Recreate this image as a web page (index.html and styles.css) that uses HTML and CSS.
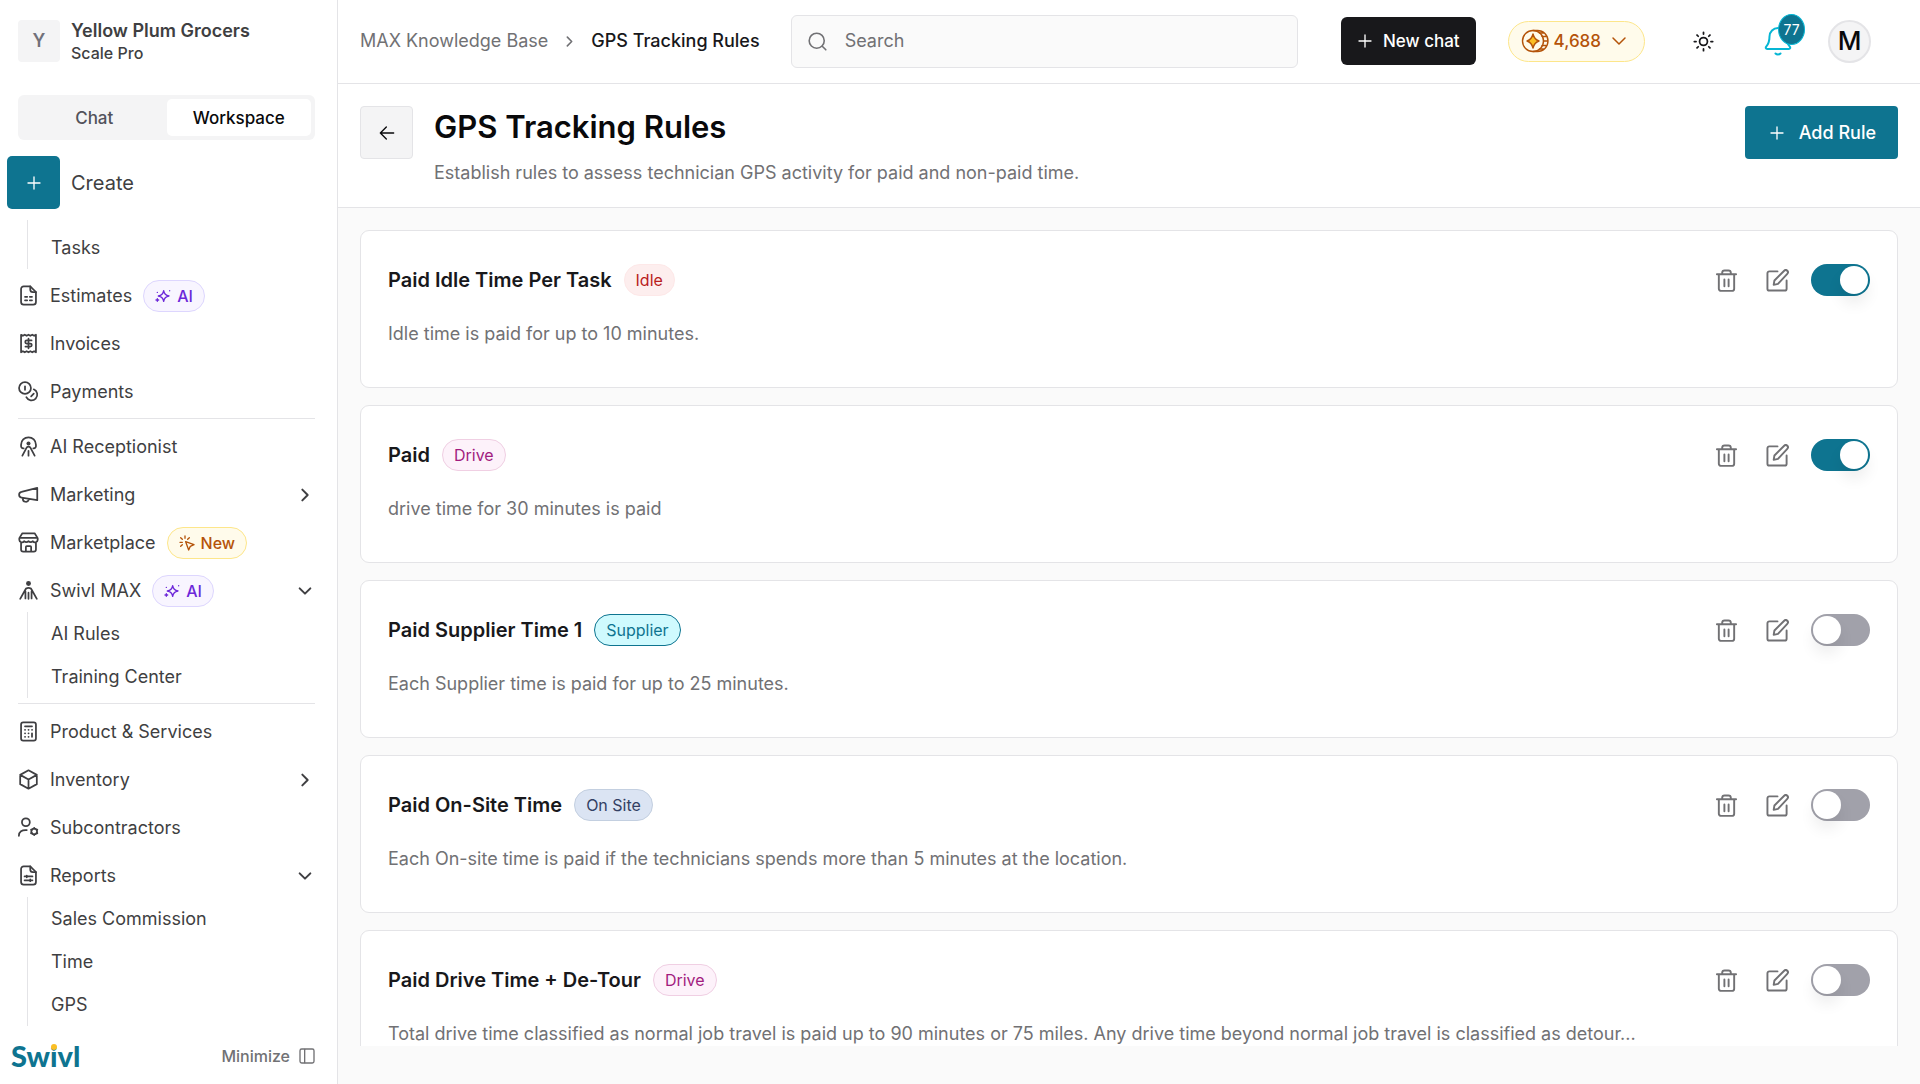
FILE: index.html
```
<!DOCTYPE html>
<html lang="en">
<head>
    <meta charset="UTF-8">
    <meta name="viewport" content="width=device-width, initial-scale=1.0">
    <title>GPS Tracking Rules</title>
    <link rel="stylesheet" href="styles.css">
</head>
<body>
    <!-- Icon set -->
    <svg class="sprite" aria-hidden="true">
        <symbol id="i-plus" viewBox="0 0 24 24"><path d="M12 3v18M3 12h18"/></symbol>
        <symbol id="i-right" viewBox="0 0 24 24"><path d="M8 4l8 8-8 8"/></symbol>
        <symbol id="i-down" viewBox="0 0 24 24"><path d="M4 8l8 8 8-8"/></symbol>
        <symbol id="i-back" viewBox="0 0 24 24"><path d="M22 12H2M11 3l-9 9 9 9"/></symbol>
        <symbol id="i-search" viewBox="0 0 24 24"><circle cx="11" cy="11" r="9.500"/><path d="M18 18l4.500 4.500"/></symbol>
        <symbol id="i-estimate" viewBox="0 0 24 24">
            <path d="M14 1.500H6.500A3 3 0 0 0 3.500 4.500v15a3 3 0 0 0 3 3h11a3 3 0 0 0 3-3V8z"/>
            <path d="M14 1.500V5a3 3 0 0 0 3 3h3.500M8 13.500h2.500M13.500 13.500H16M8 17.500h2.500M13.500 17.500H16"/>
        </symbol>
        <symbol id="i-invoice" viewBox="0 0 24 24">
            <path d="M3.500 2l2.100 1.200 2.100-1.200 2.200 1.200L12 2l2.100 1.200 2.200-1.200 2.100 1.200 2.100-1.200v20l-2.100-1.200-2.100 1.200-2.200-1.200-2.100 1.200-2.100-1.200-2.200 1.200-2.100-1.200-2.100 1.200z"/>
            <path d="M15.500 8.500H10a1.700 1.700 0 0 0 0 3.500h4a1.700 1.700 0 0 1 0 3.500H8.500M12 6.500v11"/>
        </symbol>
        <symbol id="i-payments" viewBox="0 0 24 24">
            <circle cx="8" cy="8" r="6.800"/>
            <path d="M8 6v4M18 9.500a6.600 6.600 0 1 1-8.500 9M18 14.500l-3 3"/>
        </symbol>
        <symbol id="i-reception" viewBox="0 0 24 24">
            <path d="M6.500 14H5.800A2.300 2.300 0 0 1 3.500 11.700V10a8.500 8.500 0 0 1 17 0v1.700a2.300 2.300 0 0 1-2.300 2.300h-.7"/>
            <path d="M10 13L5 22.500M14 13l5 9.500M10 13q2-1.800 4 0M12 17v5.500"/>
            <circle class="solid" cx="12" cy="8.500" r="2.300"/>
        </symbol>
        <symbol id="i-megaphone" viewBox="0 0 24 24">
            <path d="M22 4.500v14L4 15.500a3.300 3.300 0 0 1 0-6.500zM5.500 16v.8a3.500 3.500 0 0 0 6.800 1.200v-1"/>
        </symbol>
        <symbol id="i-store" viewBox="0 0 24 24">
            <path d="M5 1.500h14l3.500 5.500v2a3 3 0 0 1-5.500 1.500 3.500 3.500 0 0 1-5 0 3.500 3.500 0 0 1-5 0A3 3 0 0 1 1.500 9V7zM2 6.800h20M3.500 12v8a2.500 2.500 0 0 0 2.500 2.500h12a2.500 2.500 0 0 0 2.500-2.500v-8M9 22v-5a1 1 0 0 1 1-1h4a1 1 0 0 1 1 1v5"/>
        </symbol>
        <symbol id="i-swivl" viewBox="0 0 24 24">
            <circle class="solid" cx="12" cy="4" r="2.800"/>
            <path d="M9 10L2.500 21.500M15 10l6.500 11.500M9 10q3-2 6 0M8.500 13v8M15.500 13v8M12 14.500v7"/>
        </symbol>
        <symbol id="i-calc" viewBox="0 0 24 24">
            <rect x="3.500" y="1.500" width="17" height="21" rx="2.500"/>
            <path d="M8 6h8M8 10h.1M12 10h.1M16 10h.1M8 14h.1M12 14h.1M8 18h.1M12 18h.1M16 14v4"/>
        </symbol>
        <symbol id="i-box" viewBox="0 0 24 24">
            <path d="M12 1.500l9.500 5.200v10.600L12 22.500l-9.500-5.200V6.700zM2.500 6.700L12 12l9.500-5.300M12 12v10.500"/>
        </symbol>
        <symbol id="i-subs" viewBox="0 0 24 24">
            <circle cx="9" cy="6" r="4.500"/>
            <path d="M1 21.500c0-4.500 3.500-7 9-6.500"/>
            <circle cx="18.500" cy="16.500" r="3.300"/>
            <path d="M18.500 12.300v.9M18.500 19.800v.9M14.900 14.400l.8.500M21.300 18.100l.8.500M22.100 14.400l-.8.500M15.700 18.100l-.8.500"/>
        </symbol>
        <symbol id="i-report" viewBox="0 0 24 24">
            <path d="M14 1.500H6.500A3 3 0 0 0 3.500 4.500v15a3 3 0 0 0 3 3h11a3 3 0 0 0 3-3V8z"/>
            <path d="M14 1.500V5a3 3 0 0 0 3 3h3.500M7.500 13h9M7.500 17.500h9M10 12v2M14 16.500v2"/>
        </symbol>
        <symbol id="i-sparkle" viewBox="0 0 24 24">
            <path d="M13 4c.7 5 2.500 7 8 8-5.500 1-7.300 3-8 8-.7-5-2.500-7-8-8 5.500-1 7.300-3 8-8zM3.500 16v4M1.500 18h4M3.500 6.500v.1M22 4v.1"/>
        </symbol>
        <symbol id="i-click" viewBox="0 0 24 24">
            <path d="M10 10l12.500 4.500-5.500 2.500-2.500 5.500zM9 1.500v3.500M2.500 4L5 6.500M1.500 11H5M15.500 4L13 6.500M5 14.500l-2.500 2.500"/>
        </symbol>
        <symbol id="i-coin" viewBox="0 0 28 24">
            <circle cx="12" cy="12" r="10.500"/>
            <path d="M12 1.500h4.500a10.500 10.500 0 0 1 0 21H12M18.500 4h4M21 7.500h4.200M22.500 12H27M21 16.500h4.200M18.500 20h4"/>
            <path class="star" d="M12 5c1 4 3 6 6 7-3 1-5 3-6 7-1-4-3-6-6-7 3-1 5-3 6-7z"/>
        </symbol>
        <symbol id="i-sun" viewBox="0 0 24 24">
            <circle cx="12" cy="12" r="4.500"/>
            <path d="M12 1.500v2M12 20.500v2M1.500 12h2M20.500 12h2M4.600 4.600L6 6M18 18l1.400 1.400M4.600 19.400L6 18M18 6l1.400-1.400"/>
        </symbol>
        <symbol id="i-bell" viewBox="0 0 28 30">
            <path d="M14 2a8.500 8.500 0 0 0-8.500 8.500c0 5-1 7.500-3.300 10.200-.8 1-.4 2.300 1 2.300h21.600c1.400 0 1.800-1.300 1-2.300-2.300-2.700-3.300-5.200-3.300-10.200A8.500 8.500 0 0 0 14 2zM11.500 27.500a3.500 3.500 0 0 0 5 0"/>
        </symbol>
        <symbol id="i-trash" viewBox="0 0 24 24">
            <path d="M2 5.500h20M4 5.500v15a2.300 2.300 0 0 0 2.300 2.300h11.400a2.300 2.300 0 0 0 2.300-2.300v-15M7.500 5.500V4A2.500 2.500 0 0 1 10 1.500h4A2.500 2.500 0 0 1 16.500 4v1.500M9.800 11v7M14.200 11v7"/>
        </symbol>
        <symbol id="i-edit" viewBox="0 0 24 24">
            <path d="M12 2.500H3.500a2 2 0 0 0-2 2v16a2 2 0 0 0 2 2h16a2 2 0 0 0 2-2V12"/>
            <path d="M8 16.500l.8-4.500L19 1.800a2.200 2.200 0 0 1 3.200 3.200L12.500 15.500z"/>
        </symbol>
        <symbol id="i-panel" viewBox="0 0 24 24"><rect x="1.500" y="1.500" width="21" height="21" rx="2.500"/><path d="M8.500 2v20"/></symbol>
    </svg>

    <div class="app">
        <aside class="sidebar">
            <div class="company">
                <span class="company-logo">Y</span>
                <div class="company-info">
                    <div class="company-name">Yellow Plum Grocers</div>
                    <div class="company-plan">Scale Pro</div>
                </div>
            </div>

            <div class="tabs">
                <button type="button" class="tab">Chat</button>
                <button type="button" class="tab active">Workspace</button>
            </div>

            <button type="button" class="create">
                <span class="create-icon"><svg class="icon icon-sm"><use href="#i-plus"/></svg></span>
                Create
            </button>

            <nav class="nav">
                <div class="nav-sub nav-sub-first">
                    <a href="#">Tasks</a>
                </div>
                <a class="nav-item" href="#"><svg class="icon"><use href="#i-estimate"/></svg>Estimates
                    <span class="tag tag-ai"><svg class="icon icon-sm"><use href="#i-sparkle"/></svg>AI</span></a>
                <a class="nav-item" href="#"><svg class="icon"><use href="#i-invoice"/></svg>Invoices</a>
                <a class="nav-item" href="#"><svg class="icon"><use href="#i-payments"/></svg>Payments</a>
                <hr>
                <a class="nav-item" href="#"><svg class="icon"><use href="#i-reception"/></svg>AI Receptionist</a>
                <a class="nav-item" href="#"><svg class="icon"><use href="#i-megaphone"/></svg>Marketing
                    <svg class="icon icon-sm chevron"><use href="#i-right"/></svg></a>
                <a class="nav-item" href="#"><svg class="icon"><use href="#i-store"/></svg>Marketplace
                    <span class="tag tag-new"><svg class="icon icon-sm"><use href="#i-click"/></svg>New</span></a>
                <a class="nav-item" href="#"><svg class="icon"><use href="#i-swivl"/></svg>Swivl MAX
                    <span class="tag tag-ai"><svg class="icon icon-sm"><use href="#i-sparkle"/></svg>AI</span>
                    <svg class="icon icon-sm chevron"><use href="#i-down"/></svg></a>
                <div class="nav-sub">
                    <a href="#">AI Rules</a>
                    <a href="#">Training Center</a>
                </div>
                <hr>
                <a class="nav-item" href="#"><svg class="icon"><use href="#i-calc"/></svg>Product &amp; Services</a>
                <a class="nav-item" href="#"><svg class="icon"><use href="#i-box"/></svg>Inventory
                    <svg class="icon icon-sm chevron"><use href="#i-right"/></svg></a>
                <a class="nav-item" href="#"><svg class="icon"><use href="#i-subs"/></svg>Subcontractors</a>
                <a class="nav-item" href="#"><svg class="icon"><use href="#i-report"/></svg>Reports
                    <svg class="icon icon-sm chevron"><use href="#i-down"/></svg></a>
                <div class="nav-sub">
                    <a href="#">Sales Commission</a>
                    <a href="#">Time</a>
                    <a href="#">GPS</a>
                </div>
            </nav>

            <div class="sidebar-footer">
                <a class="brand" href="#">Sw<span class="brand-i">i</span>vl</a>
                <button type="button" class="minimize">Minimize <svg class="icon icon-sm"><use href="#i-panel"/></svg></button>
            </div>
        </aside>

        <main class="main">
            <header class="topbar">
                <div class="breadcrumb">
                    <a href="#">MAX Knowledge Base</a>
                    <svg class="icon"><use href="#i-right"/></svg>
                    <span class="current">GPS Tracking Rules</span>
                </div>
                <label class="search">
                    <svg class="icon"><use href="#i-search"/></svg>
                    <input type="search" placeholder="Search" aria-label="Search">
                </label>
                <button type="button" class="new-chat"><svg class="icon"><use href="#i-plus"/></svg>New chat</button>
                <button type="button" class="credits">
                    <svg class="icon coin"><use href="#i-coin"/></svg>4,688
                    <svg class="icon credits-arrow"><use href="#i-down"/></svg>
                </button>
                <button type="button" class="theme" aria-label="Theme"><svg class="icon"><use href="#i-sun"/></svg></button>
                <button type="button" class="bell" aria-label="Notifications">
                    <svg class="icon"><use href="#i-bell"/></svg>
                    <span class="bell-count">77</span>
                </button>
                <button type="button" class="avatar">M</button>
            </header>

            <section class="page-head">
                <button type="button" class="back" aria-label="Back"><svg class="icon icon-sm"><use href="#i-back"/></svg></button>
                <div class="page-title">
                    <h1>GPS Tracking Rules</h1>
                    <p>Establish rules to assess technician GPS activity for paid and non-paid time.</p>
                </div>
                <button type="button" class="add-rule"><svg class="icon icon-sm"><use href="#i-plus"/></svg>Add Rule</button>
            </section>

            <section class="rules">
                <article class="rule">
                    <div class="rule-head">
                        <h2>Paid Idle Time Per Task</h2>
                        <span class="badge badge-idle">Idle</span>
                        <div class="rule-actions">
                            <button type="button" aria-label="Delete"><svg class="icon"><use href="#i-trash"/></svg></button>
                            <button type="button" aria-label="Edit"><svg class="icon"><use href="#i-edit"/></svg></button>
                            <input type="checkbox" class="switch" aria-label="Paid Idle Time Per Task" checked>
                        </div>
                    </div>
                    <p>Idle time is paid for up to 10 minutes.</p>
                </article>

                <article class="rule">
                    <div class="rule-head">
                        <h2>Paid</h2>
                        <span class="badge badge-drive">Drive</span>
                        <div class="rule-actions">
                            <button type="button" aria-label="Delete"><svg class="icon"><use href="#i-trash"/></svg></button>
                            <button type="button" aria-label="Edit"><svg class="icon"><use href="#i-edit"/></svg></button>
                            <input type="checkbox" class="switch" aria-label="Paid" checked>
                        </div>
                    </div>
                    <p>drive time for 30 minutes is paid</p>
                </article>

                <article class="rule">
                    <div class="rule-head">
                        <h2>Paid Supplier Time 1</h2>
                        <span class="badge badge-supplier">Supplier</span>
                        <div class="rule-actions">
                            <button type="button" aria-label="Delete"><svg class="icon"><use href="#i-trash"/></svg></button>
                            <button type="button" aria-label="Edit"><svg class="icon"><use href="#i-edit"/></svg></button>
                            <input type="checkbox" class="switch" aria-label="Paid Supplier Time 1">
                        </div>
                    </div>
                    <p>Each Supplier time is paid for up to 25 minutes.</p>
                </article>

                <article class="rule">
                    <div class="rule-head">
                        <h2>Paid On-Site Time</h2>
                        <span class="badge badge-site">On Site</span>
                        <div class="rule-actions">
                            <button type="button" aria-label="Delete"><svg class="icon"><use href="#i-trash"/></svg></button>
                            <button type="button" aria-label="Edit"><svg class="icon"><use href="#i-edit"/></svg></button>
                            <input type="checkbox" class="switch" aria-label="Paid On-Site Time">
                        </div>
                    </div>
                    <p>Each On-site time is paid if the technicians spends more than 5 minutes at the location.</p>
                </article>

                <article class="rule">
                    <div class="rule-head">
                        <h2>Paid Drive Time + De-Tour</h2>
                        <span class="badge badge-drive">Drive</span>
                        <div class="rule-actions">
                            <button type="button" aria-label="Delete"><svg class="icon"><use href="#i-trash"/></svg></button>
                            <button type="button" aria-label="Edit"><svg class="icon"><use href="#i-edit"/></svg></button>
                            <input type="checkbox" class="switch" aria-label="Paid Drive Time + De-Tour">
                        </div>
                    </div>
                    <p>Total drive time classified as normal job travel is paid up to 90 minutes or 75 miles. Any drive time beyond normal job travel is classified as detour...</p>
                </article>
            </section>
        </main>
    </div>
</body>
</html>
```
FILE: styles.css
```
* {
    box-sizing: border-box;
}

body {
    margin: 0;
    font-family: Inter, sans-serif;
    font-size: 18px;
    line-height: 24px;
    color: #3f3f42;
    background: #fff;
}

button {
    padding: 0;
    border: none;
    background: none;
    font: inherit;
    color: inherit;
    cursor: pointer;
}

a {
    color: inherit;
    text-decoration: none;
}

h1, h2, p {
    margin: 0;
}

.sprite {
    display: none;
}

.icon {
    flex: none;
    width: 21px;
    height: 21px;
    fill: none;
    stroke: currentColor;
    stroke-width: 2;
    stroke-linecap: round;
    stroke-linejoin: round;
}

.icon-sm {
    width: 16px;
    height: 16px;
}

.solid {
    fill: currentColor;
    stroke: none;
}

.app {
    display: flex;
    height: 100vh;
}

/* Sidebar */
.sidebar {
    display: flex;
    flex-direction: column;
    flex: none;
    width: 338px;
    border-right: 1px solid #e4e4e7;
}

.company {
    display: flex;
    align-items: center;
    gap: 11px;
    padding: 19px 18px 0;
}

.company-logo {
    display: flex;
    align-items: center;
    justify-content: center;
    width: 42px;
    height: 42px;
    border-radius: 4px;
    background: #f4f4f5;
    color: #71717a;
    font-weight: 600;
}

.company-name {
    font-weight: 600;
}

.company-plan {
    font-size: 16px;
    font-weight: 500;
    line-height: 20px;
}

.tabs {
    display: flex;
    margin: 32px 22px 0 18px;
    padding: 4px;
    border-radius: 6px;
    background: #f4f4f5;
}

.tab {
    flex: 1;
    height: 37px;
    border-radius: 5px;
    font-size: 17px;
    font-weight: 500;
    color: #52525b;
}

.tab.active {
    background: #fff;
    color: #09090b;
}

.create {
    display: flex;
    align-items: center;
    gap: 11px;
    margin: 16px 0 11px 7px;
    font-size: 20px;
}

.create-icon {
    display: flex;
    align-items: center;
    justify-content: center;
    width: 53px;
    height: 53px;
    border-radius: 5px;
    background: #0e7490;
    color: #fff;
}

.nav {
    flex: 1;
    min-height: 0;
    overflow: hidden;
    padding: 0 22px 0 18px;
}

.nav-item {
    display: flex;
    align-items: center;
    gap: 11px;
    height: 43px;
    margin-bottom: 5px;
}

.nav-item:has(+ .nav-sub) {
    margin-bottom: 0;
}

.chevron {
    margin-left: auto;
    margin-right: 2px;
    stroke-width: 3;
}

.nav hr {
    margin: 5px 0 6px;
    border: none;
    border-top: 1px solid #e4e4e7;
}

.nav-sub {
    margin: 0 0 5px 9px;
    padding-left: 23px;
    border-left: 1px solid #e4e4e7;
}

.nav-sub a {
    display: flex;
    align-items: center;
    height: 43px;
}

.nav-sub-first {
    padding-top: 6px;
}

.tag {
    display: flex;
    align-items: center;
    gap: 6px;
    height: 32px;
    padding: 0 11px;
    border: 1px solid;
    border-radius: 16px;
    font-size: 16px;
    font-weight: 500;
}

.tag-ai {
    border-color: #ddd6fe;
    background: #f8f5ff;
    color: #6d28d9;
}

.tag-new {
    border-color: #fde68a;
    background: #fffbeb;
    color: #b45309;
}

.sidebar-footer {
    display: flex;
    align-items: center;
    justify-content: space-between;
    height: 56px;
    padding: 0 22px 0 11px;
}

.brand {
    font-family: Lato, sans-serif;
    font-size: 29px;
    font-weight: 900;
    color: #0e7490;
}

.brand-i {
    position: relative;
}

/* Yellow dot laid over the letter i */
.brand-i::after {
    content: "";
    position: absolute;
    top: 6px;
    left: 1px;
    width: 6px;
    height: 6px;
    border-radius: 50%;
    background: #fbbf24;
}

.minimize {
    display: flex;
    align-items: center;
    gap: 9px;
    font-size: 16px;
    font-weight: 500;
    color: #717174;
}

/* Main area */
.main {
    display: flex;
    flex-direction: column;
    flex: 1;
    min-width: 0;
    background: #fafafa;
}

.topbar {
    display: flex;
    align-items: center;
    flex: none;
    height: 84px;
    padding: 0 49px 1px 22px;
    border-bottom: 1px solid #e4e4e7;
    background: #fff;
}

.breadcrumb {
    display: flex;
    align-items: center;
    gap: 15px;
    color: #717174;
}

.breadcrumb .icon {
    width: 13px;
    height: 13px;
    stroke-width: 3;
}

.breadcrumb .current {
    font-weight: 500;
    color: #18181b;
}

.search {
    display: flex;
    align-items: center;
    flex: 1;
    gap: 18px;
    height: 53px;
    margin: 0 43px 0 31px;
    padding: 0 16px;
    border: 1px solid #e4e4e7;
    border-radius: 6px;
    background: #fafafa;
    color: #717174;
}

.search .icon {
    width: 19px;
    height: 19px;
}

.search input {
    flex: 1;
    min-width: 0;
    padding: 0;
    border: none;
    outline: none;
    background: none;
    font: inherit;
    color: inherit;
}

.search input::placeholder {
    color: #717174;
}

.new-chat {
    display: flex;
    align-items: center;
    justify-content: center;
    gap: 10px;
    height: 48px;
    padding: 0 16px;
    border-radius: 6px;
    background: #18181b;
    color: #fff;
    font-size: 17px;
    font-weight: 500;
}

.new-chat .icon {
    width: 16px;
    height: 16px;
}

.credits {
    display: flex;
    align-items: center;
    gap: 5px;
    height: 41px;
    margin-left: 32px;
    padding: 0 16px 0 12px;
    border: 1px solid #fde68a;
    border-radius: 21px;
    background: #fffbeb;
    color: #b45309;
    font-size: 17px;
    font-weight: 500;
}

.credits .coin {
    width: 28px;
    height: 24px;
    stroke-width: 1.4;
}

.star {
    fill: #fbbf24;
}

.credits-arrow {
    width: 18px;
    height: 18px;
    margin-left: 4px;
}

.theme {
    display: flex;
    margin-left: 48px;
    color: #18181b;
}

.bell {
    display: flex;
    position: relative;
    margin-left: 50px;
    color: #06b6d4;
}

.bell .icon {
    width: 28px;
    height: 30px;
}

.bell-count {
    position: absolute;
    top: -12px;
    left: 14px;
    width: 27px;
    height: 31px;
    border: 1px solid #06b6d4;
    border-radius: 50%;
    background: #0e7490;
    color: #fff;
    font-size: 14px;
    line-height: 29px;
    text-align: center;
}

.avatar {
    width: 43px;
    height: 43px;
    margin-left: 36px;
    border: 2px solid #e4e4e7;
    border-radius: 50%;
    background: #f4f4f5;
    color: #09090b;
    font-size: 26px;
    font-weight: 500;
}

.page-head {
    display: flex;
    align-items: flex-start;
    flex: none;
    gap: 21px;
    padding: 22px;
    border-bottom: 1px solid #e4e4e7;
    background: #fff;
}

.back {
    display: flex;
    align-items: center;
    justify-content: center;
    width: 53px;
    height: 53px;
    border: 1px solid #e4e4e7;
    border-radius: 4px;
    background: #f4f4f5;
    color: #09090b;
}

.page-title {
    flex: 1;
}

.page-title h1 {
    font-size: 31px;
    font-weight: 600;
    line-height: 42px;
    color: #09090b;
}

.page-title p {
    margin-top: 13px;
    color: #717174;
}

.add-rule {
    display: flex;
    align-items: center;
    gap: 14px;
    height: 53px;
    padding: 0 22px 0 24px;
    border-radius: 4px;
    background: #0e7490;
    color: #fff;
    font-weight: 500;
}

/* Rules list */
.rules {
    display: flex;
    flex-direction: column;
    flex: 1;
    gap: 17px;
    min-height: 0;
    overflow: hidden;
    margin-bottom: 38px;
    padding: 22px 22px 0;
}

.rule {
    flex: none;
    padding: 33px 27px 41px;
    border: 1px solid #e4e4e7;
    border-radius: 9px;
    background: #fff;
}

.rule-head {
    display: flex;
    align-items: center;
    gap: 12px;
}

.rule h2 {
    font-size: 20px;
    font-weight: 600;
    line-height: 32px;
    color: #18181b;
}

.rule p {
    margin-top: 26px;
    overflow: hidden;
    white-space: nowrap;
    text-overflow: ellipsis;
    color: #717174;
}

.badge {
    height: 32px;
    padding: 0 11px;
    border: 1px solid;
    border-radius: 16px;
    font-size: 16px;
    line-height: 30px;
}

.badge-idle {
    border-color: #fde8e8;
    background: #fdeeee;
    color: #b91c1c;
}

.badge-drive {
    border-color: #f0cfe3;
    background: #fdf2fa;
    color: #a21c7f;
}

.badge-supplier {
    border-color: #0e7490;
    background: #cffafe;
    color: #0e7490;
}

.badge-site {
    border-color: #c3cfe0;
    background: #dbe4f3;
    color: #334063;
}

.rule-actions {
    display: flex;
    align-items: center;
    margin-left: auto;
    color: #717174;
}

.rule-actions button {
    display: flex;
    margin-right: 28px;
}

.rule-actions .icon {
    width: 23px;
    height: 23px;
}

.rule-actions button + button {
    margin-right: 22px;
}

.switch {
    appearance: none;
    width: 59px;
    height: 32px;
    margin: 0;
    padding: 2px;
    border-radius: 16px;
    background: #a1a1aa;
    cursor: pointer;
}

.switch::before {
    content: "";
    display: block;
    width: 28px;
    height: 28px;
    border-radius: 50%;
    background: #fff;
    box-shadow: 0 10px 15px rgba(0, 0, 0, 0.07);
}

.switch:checked {
    background: #0e7490;
}

.switch:checked::before {
    margin-left: auto;
}
```
